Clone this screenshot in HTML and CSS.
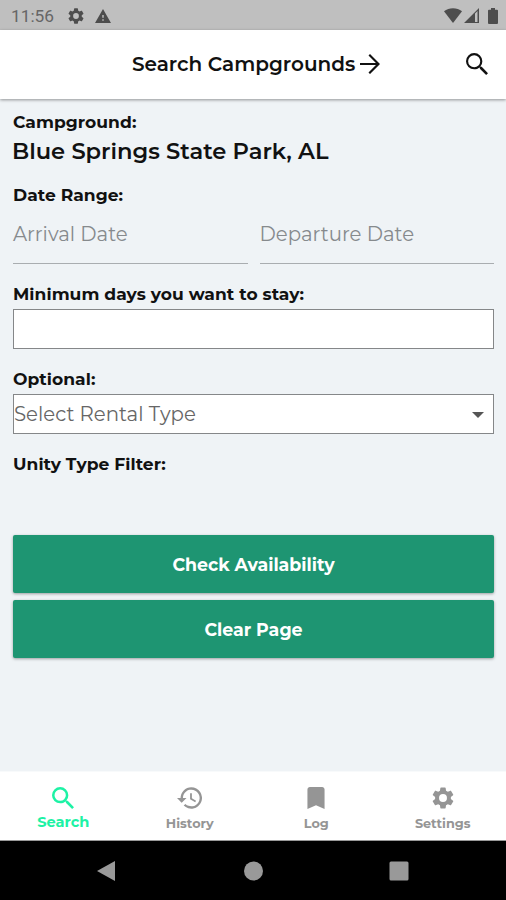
FILE: index.html
```html
<!DOCTYPE html>
<html lang="en">
<head>
<meta charset="utf-8">
<title>Search Campgrounds</title>
<link rel="stylesheet" href="styles.css">
</head>
<body>
<div class="statusbar">
  <span class="time">11:56</span>
  <svg class="st-gear" viewBox="2 2 20 20"><path d="M19.14 12.94c.04-.3.06-.61.06-.94 0-.32-.02-.64-.07-.94l2.03-1.58a.49.49 0 0 0 .12-.61l-1.92-3.32a.49.49 0 0 0-.59-.22l-2.39.96c-.5-.38-1.03-.7-1.62-.94l-.36-2.54a.48.48 0 0 0-.48-.41h-3.84a.48.48 0 0 0-.47.41l-.36 2.54c-.59.24-1.13.57-1.62.94l-2.39-.96a.48.48 0 0 0-.59.22L2.74 8.87a.48.48 0 0 0 .12.61l2.03 1.58c-.05.3-.09.63-.09.94s.02.64.07.94l-2.03 1.58a.49.49 0 0 0-.12.61l1.92 3.32c.12.22.37.29.59.22l2.39-.96c.5.38 1.03.7 1.62.94l.36 2.54c.05.24.24.41.48.41h3.84c.24 0 .44-.17.47-.41l.36-2.54c.59-.24 1.13-.56 1.62-.94l2.39.96c.22.08.47 0 .59-.22l1.92-3.32a.48.48 0 0 0-.12-.61zM12 15.6a3.6 3.6 0 1 1 0-7.2 3.6 3.6 0 0 1 0 7.2z"/></svg>
  <svg class="st-warn" viewBox="1 2 22 19"><path d="M1 21h22L12 2zm12-3h-2v-2h2zm0-4h-2v-4h2z"/></svg>
  <span class="spacer"></span>
  <svg class="st-wifi" viewBox="0 0 18 15"><path d="M0 3.2C5-.9 13-.9 18 3.2L9 15z"/></svg>
  <svg class="st-signal" viewBox="0 0 15 15"><path fill-rule="evenodd" d="M0 15 15 0v15zM11 5.5V14h2.5V3z"/></svg>
  <svg class="st-battery" viewBox="0 0 10 16"><path d="M3 0h4v1.8h2q1 0 1 1V15q0 1-1 1H1q-1 0-1-1V2.8q0-1 1-1h2z"/></svg>
</div>
<header class="header">
  <h1 class="title"><span>Search Campgrounds</span>
  <svg class="arrow" viewBox="4 4 16 16"><path d="m12 4-1.2 1.2 5.95 5.95H4v1.7h12.750l-5.950 5.950L12 20l8-8z"/></svg></h1>
  <svg class="find" viewBox="3 3 17.490 17.490"><path d="M15.500 14h-.79l-.28-.27A6.470 6.470 0 0 0 16 9.500 6.500 6.500 0 1 0 9.500 16c1.610 0 3.090-.59 4.230-1.570l.27.28v.79l5 4.990L20.490 19zm-6 .3a4.800 4.800 0 1 1 0-9.600 4.800 4.800 0 0 1 0 9.600z"/></svg>
</header>
<main class="content">
  <div class="label">Campground:</div>
  <div class="park">Blue Springs State Park, AL</div>
  <div class="label label-dates">Date Range:</div>
  <div class="dates">
    <div class="date">Arrival Date</div>
    <div class="date">Departure Date</div>
  </div>
  <div class="label label-days">Minimum days you want to stay:</div>
  <div class="box"></div>
  <div class="label label-opt">Optional:</div>
  <div class="box select"><span>Select Rental Type</span><svg class="caret" viewBox="0 0 12 6"><path d="M0 0h12L6 6z"/></svg></div>
  <div class="label label-unity">Unity Type Filter:</div>
  <div class="buttons">
    <div class="button">Check Availability</div>
    <div class="button">Clear Page</div>
  </div>
</main>
<nav class="tabs">
  <div class="tab active"><svg class="tab-search" viewBox="3 3 17.490 17.490"><path d="M15.500 14h-.79l-.28-.27A6.470 6.470 0 0 0 16 9.500 6.500 6.500 0 1 0 9.500 16c1.610 0 3.090-.59 4.230-1.570l.27.28v.79l5 4.990L20.490 19zm-6 0a4.500 4.500 0 1 1 0-9 4.500 4.500 0 0 1 0 9z"/></svg><span>Search</span></div>
  <div class="tab"><svg class="tab-history" viewBox="1 3 21 18"><path d="M13 3a9 9 0 0 0-9 9H1l3.890 3.890.07.14L9 12H6a7 7 0 1 1 2.060 4.940l-1.420 1.420A9 9 0 1 0 13 3zm-1 5v5l4.280 2.540.72-1.210-3.500-2.080V8z"/></svg><span>History</span></div>
  <div class="tab"><svg class="tab-log" viewBox="5 3 14 18"><path d="M17 3H7c-1.100 0-2 .9-2 2v16l7-3 7 3V5c0-1.100-.9-2-2-2z"/></svg><span>Log</span></div>
  <div class="tab"><svg class="tab-gear" viewBox="2 2 20 20"><path d="M19.14 12.94c.04-.3.06-.61.06-.94 0-.32-.02-.64-.07-.94l2.03-1.58a.49.49 0 0 0 .12-.61l-1.92-3.32a.49.49 0 0 0-.59-.22l-2.39.96c-.5-.38-1.03-.7-1.62-.94l-.36-2.54a.48.48 0 0 0-.48-.41h-3.84a.48.48 0 0 0-.47.41l-.36 2.54c-.59.24-1.13.57-1.62.94l-2.39-.96a.48.48 0 0 0-.59.22L2.74 8.87a.48.48 0 0 0 .12.61l2.03 1.58c-.05.3-.09.63-.09.94s.02.64.07.94l-2.03 1.58a.49.49 0 0 0-.12.61l1.92 3.32c.12.22.37.29.59.22l2.39-.96c.5.38 1.03.7 1.62.94l.36 2.54c.05.24.24.41.48.41h3.84c.24 0 .44-.17.47-.41l.36-2.54c.59-.24 1.13-.56 1.62-.94l2.39.96c.22.08.47 0 .59-.22l1.92-3.32a.48.48 0 0 0-.12-.61zM12 15.6a3.6 3.6 0 1 1 0-7.2 3.6 3.6 0 0 1 0 7.2z"/></svg><span>Settings</span></div>
</nav>
<div class="sysnav">
  <svg viewBox="0 0 18 20"><path d="M18 0v20L0 10z"/></svg>
  <svg viewBox="0 0 20 20"><circle cx="10.5" cy="10" r="9.5"/></svg>
  <svg viewBox="0 0 20 20"><rect x=".5" y=".5" width="19" height="19" rx="1.5"/></svg>
</div>
</body>
</html>
```

FILE: styles.css
```css
* { box-sizing: border-box; }
body { margin: 0; width: 506px; height: 900px; overflow: hidden; display: flex; flex-direction: column; background: #eff3f6; color: #111; font-family: Montserrat, Inter, sans-serif; }
svg { display: block; fill: currentColor; flex: none; }
span { white-space: nowrap; }
.statusbar { height: 30px; flex: none; background: #bfbfbf; color: #4d4d4d; display: flex; align-items: center; padding: 1px 8px 0 11px; }
.time { font: 17.3px/20px Roboto, sans-serif; color: #666; }
.st-gear { width: 16px; height: 16px; margin-left: 14px; }
.st-warn { width: 16px; height: 14px; margin-left: 11px; }
.spacer { flex: 1; }
.st-wifi { width: 18px; height: 15px; }
.st-signal { width: 15px; height: 15px; margin-left: 2px; }
.st-battery { width: 10px; height: 16px; margin-left: 9px; }
.header { height: 69px; flex: none; background: #fff; box-shadow: 0 1px 3px rgba(0,0,0,.4); display: flex; align-items: center; padding: 0 18px 2px 132px; z-index: 1; }
.title { margin: 0; font-size: 20px; font-weight: 600; display: flex; align-items: center; flex: 1; }
.arrow { width: 20px; height: 20px; margin-left: 5px; }
.find { width: 22px; height: 22px; }
.content { flex: 1; padding: 13px 12px 0 13px; }
.label { font-size: 17.1px; line-height: 20px; font-weight: 700; letter-spacing: .05px; }
.park { font-size: 22.6px; line-height: 28px; font-weight: 600; margin-top: 5px; margin-left: -1px; }
.label-dates { margin-top: 20px; }
.dates { display: flex; gap: 12px; margin-top: 14px; }
.date { flex: 1; height: 45px; border-bottom: 1px solid #a9adb0; font-size: 19.7px; line-height: 30px; font-weight: 400; color: #868a8d; }
.label-days { margin-top: 20px; }
.box { height: 40px; border: 1px solid #858789; background: #fff; margin-top: 5px; }
.label-opt { margin-top: 20px; }
.select { display: flex; align-items: center; padding: 0 9px 1px 0; justify-content: space-between; font-size: 19.7px; font-weight: 400; color: #666; }
.caret { width: 12px; height: 6px; color: #555; margin-top: 3px; }
.label-unity { margin-top: 20px; }
.buttons { margin-top: 61px; display: flex; flex-direction: column; gap: 7px; }
.button { height: 58px; border-radius: 2px; background: #1e9572; color: #fff; font-size: 17.4px; font-weight: 700; display: flex; align-items: center; justify-content: center; padding-top: 1px; box-shadow: 0 1px 3px rgba(0,0,0,.35); }
.tabs { height: 70px; flex: none; background: #fff; display: flex; color: #959595; border-top: 1px solid #f8fafb; border-bottom: 1px solid #999; }
.tab { flex: 1; display: flex; flex-direction: column; align-items: center; padding-top: 15px; font-size: 12.8px; font-weight: 700; line-height: 16px; gap: 7px; }
.tab svg { height: 22px; }
.active { color: #1df2a5; font-size: 14.6px; gap: 5px; }
.tab-search { width: 22px; }
.tab-history { width: 25px; }
.tab-log { width: 18px; }
.tab-gear { width: 24px; }
.sysnav { height: 59px; flex: none; background: #000; color: #999; display: flex; align-items: center; justify-content: space-between; padding: 0 97px 0 96px; }
.sysnav svg { width: 20px; height: 20px; }
```
